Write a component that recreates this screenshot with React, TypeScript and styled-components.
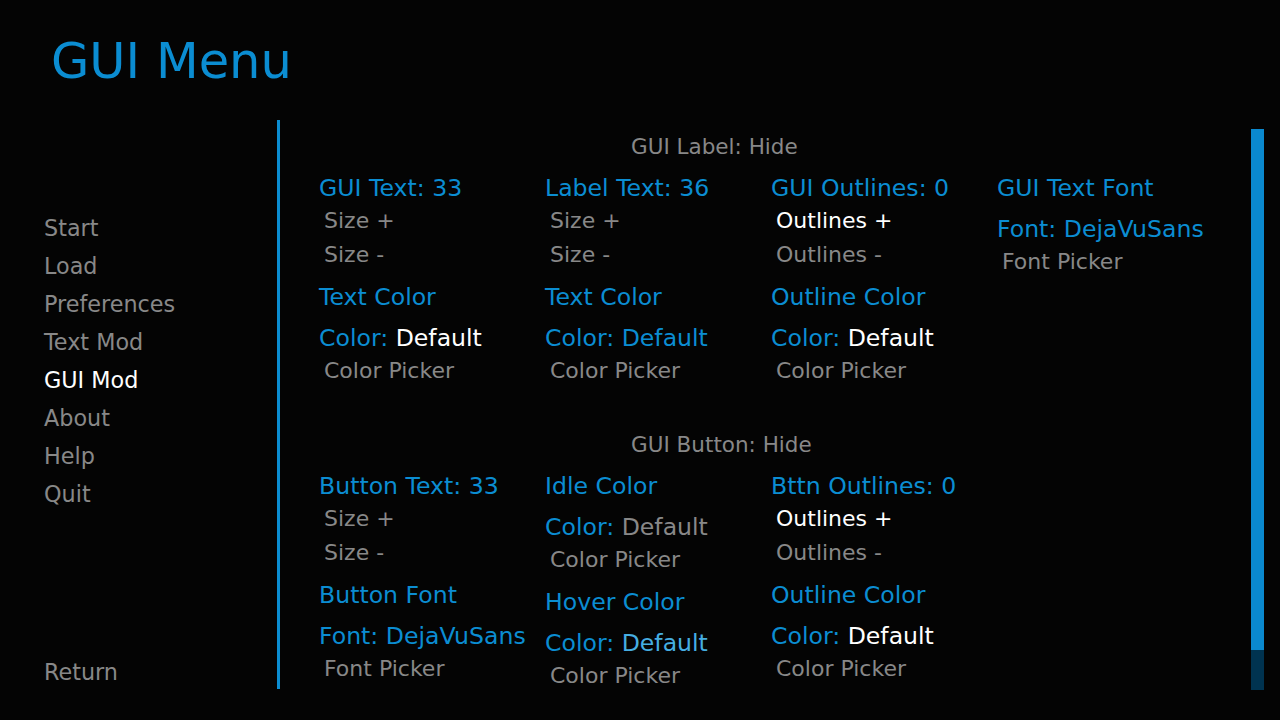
import React from "react";
import styled, { createGlobalStyle } from "styled-components";

const BLUE = "#0b8dd2";
const GRAY = "#888888";

const GlobalStyle = createGlobalStyle`
  html, body {
    margin: 0;
    padding: 0;
    background: #040404;
  }
  body {
    font-family: "DejaVu Sans", "Liberation Sans", sans-serif;
  }
`;

type Tone = "blue" | "white" | "gray" | "light";

const toneColor = (t: Tone) =>
  t === "white" ? "#ffffff" : t === "gray" ? GRAY : t === "light" ? "#46aee2" : BLUE;

type Item =
  | { kind: "label"; text: string; value?: string; tone?: Tone }
  | { kind: "button"; text: string; active?: boolean };

const navItems = ["Start", "Load", "Preferences", "Text Mod", "GUI Mod", "About", "Help", "Quit"];

const labelSection: Item[][] = [
  [
    { kind: "label", text: "GUI Text: 33" },
    { kind: "button", text: "Size +" },
    { kind: "button", text: "Size -" },
    { kind: "label", text: "Text Color" },
    { kind: "label", text: "Color: ", value: "Default", tone: "white" },
    { kind: "button", text: "Color Picker" },
  ],
  [
    { kind: "label", text: "Label Text: 36" },
    { kind: "button", text: "Size +" },
    { kind: "button", text: "Size -" },
    { kind: "label", text: "Text Color" },
    { kind: "label", text: "Color: ", value: "Default", tone: "blue" },
    { kind: "button", text: "Color Picker" },
  ],
  [
    { kind: "label", text: "GUI Outlines: 0" },
    { kind: "button", text: "Outlines +", active: true },
    { kind: "button", text: "Outlines -" },
    { kind: "label", text: "Outline Color" },
    { kind: "label", text: "Color: ", value: "Default", tone: "white" },
    { kind: "button", text: "Color Picker" },
  ],
  [
    { kind: "label", text: "GUI Text Font" },
    { kind: "label", text: "Font: DejaVuSans" },
    { kind: "button", text: "Font Picker" },
  ],
];

const buttonSection: Item[][] = [
  [
    { kind: "label", text: "Button Text: 33" },
    { kind: "button", text: "Size +" },
    { kind: "button", text: "Size -" },
    { kind: "label", text: "Button Font" },
    { kind: "label", text: "Font: DejaVuSans" },
    { kind: "button", text: "Font Picker" },
  ],
  [
    { kind: "label", text: "Idle Color" },
    { kind: "label", text: "Color: ", value: "Default", tone: "gray" },
    { kind: "button", text: "Color Picker" },
    { kind: "label", text: "Hover Color" },
    { kind: "label", text: "Color: ", value: "Default", tone: "light" },
    { kind: "button", text: "Color Picker" },
  ],
  [
    { kind: "label", text: "Bttn Outlines: 0" },
    { kind: "button", text: "Outlines +", active: true },
    { kind: "button", text: "Outlines -" },
    { kind: "label", text: "Outline Color" },
    { kind: "label", text: "Color: ", value: "Default", tone: "white" },
    { kind: "button", text: "Color Picker" },
  ],
  [],
];

export default function App() {
  return (
    <Screen>
      <GlobalStyle />
      <TitleBar>
        <Title>GUI Menu</Title>
      </TitleBar>
      <Main>
        <Nav>
          {navItems.map((item) => (
            <NavButton key={item} $active={item === "GUI Mod"}>
              {item}
            </NavButton>
          ))}
          <ReturnButton>Return</ReturnButton>
        </Nav>
        <Divider />
        <Content>
          <Section title="GUI Label: Hide" columns={labelSection} />
          <Section title="GUI Button: Hide" columns={buttonSection} second />
        </Content>
        <Scrollbar>
          <ScrollThumb />
        </Scrollbar>
      </Main>
    </Screen>
  );
}

function Section({ title, columns, second }: { title: string; columns: Item[][]; second?: boolean }) {
  return (
    <SectionBox $second={second}>
      <SectionHeader>{title}</SectionHeader>
      <Grid>
        {columns.map((col, i) => (
          <Column key={i}>
            {col.map((item, j) =>
              item.kind === "label" ? (
                <Label key={j}>
                  {item.text}
                  {item.value && <Value $tone={item.tone || "blue"}>{item.value}</Value>}
                </Label>
              ) : (
                <OptionButton key={j} $active={item.active}>
                  {item.text}
                </OptionButton>
              )
            )}
          </Column>
        ))}
      </Grid>
    </SectionBox>
  );
}

const Screen = styled.div`
  width: 1280px;
  height: 720px;
  background: #040404;
  overflow: hidden;
  display: flex;
  flex-direction: column;
`;

const TitleBar = styled.div`
  height: 120px;
  box-sizing: border-box;
  padding: 32px 0 0 51px;
`;

const Title = styled.h1`
  margin: 0;
  font-size: 49.5px;
  font-weight: 400;
  line-height: normal;
  color: ${BLUE};
`;

const Main = styled.div`
  display: flex;
  height: 570px;
`;

const Nav = styled.div`
  width: 277px;
  box-sizing: border-box;
  padding: 89px 0 0 44px;
  display: flex;
  flex-direction: column;
`;

const NavButton = styled.div<{ $active?: boolean }>`
  font-size: 22.3px;
  line-height: 38px;
  color: ${(p) => (p.$active ? "#ffffff" : GRAY)};
`;

const ReturnButton = styled(NavButton)`
  margin-top: auto;
  line-height: 35px;
`;

const Divider = styled.div`
  width: 3px;
  height: 569px;
  background: ${BLUE};
`;

const Content = styled.div`
  flex: 1;
  box-sizing: border-box;
  padding: 11px 0 0 39px;
  overflow: hidden;
`;

const SectionBox = styled.div<{ $second?: boolean }>`
  margin-top: ${(p) => (p.$second ? "41px" : "0")};
`;

const SectionHeader = styled.div`
  margin-left: 312px;
  font-size: 21.5px;
  line-height: 32px;
  color: ${GRAY};
`;

const Grid = styled.div`
  display: grid;
  grid-template-columns: repeat(4, 226px);
`;

const Column = styled.div`
  display: flex;
  flex-direction: column;
`;

const Label = styled.div`
  padding-top: 9px;
  font-size: 23.6px;
  line-height: 32px;
  color: ${BLUE};
  white-space: nowrap;
`;

const Value = styled.span<{ $tone: Tone }>`
  color: ${(p) => toneColor(p.$tone)};
`;

const OptionButton = styled.div<{ $active?: boolean }>`
  padding-left: 5px;
  font-size: 22px;
  line-height: 34px;
  color: ${(p) => (p.$active ? "#ffffff" : GRAY)};
  white-space: nowrap;
`;

const Scrollbar = styled.div`
  width: 13px;
  height: 561px;
  margin: 9px 16px 0 0;
  background: #003350;
  display: flex;
  flex-direction: column;
`;

const ScrollThumb = styled.div`
  height: 521px;
  background: #0a89cf;
`;
